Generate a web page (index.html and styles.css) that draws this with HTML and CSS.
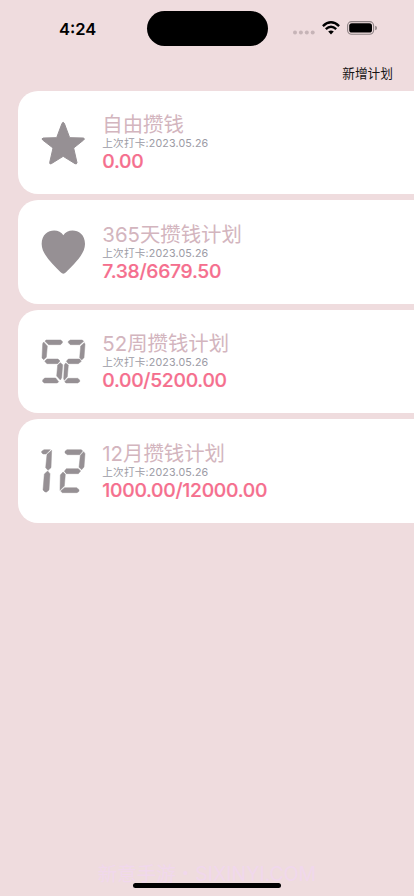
FILE: index.html
```html
<!DOCTYPE html>
<html lang="zh-CN">
<head>
<meta charset="utf-8">
<title>攒钱计划</title>
<link rel="stylesheet" href="styles.css">
</head>
<body>
<header class="status">
  <div class="time">4:24</div>
  <div class="island"></div>
  <div class="indicators">
    <svg class="dots" width="22" height="5" viewBox="0 0 22 5"><circle cx="2" cy="2.5" r="2"/><circle cx="7.9" cy="2.5" r="2"/><circle cx="13.8" cy="2.5" r="2"/><circle cx="19.7" cy="2.5" r="2"/></svg>
    <svg class="wifi" width="18" height="14" viewBox="0 0 18 14"><g fill="none" stroke="#000" stroke-width="2.4"><path d="M.9 5.1Q9-2.4 17.1 5.1"/><path d="M3.8 8.2Q9 3.5 14.2 8.2"/></g><path d="M6.2 10.6Q9 8.3 11.8 10.6L9 13.4Z"/></svg>
    <svg class="battery" width="31" height="14" viewBox="0 0 31 14"><rect x=".6" y=".6" width="26" height="12.6" rx="4" fill="none" stroke="#8d8284" stroke-width="1.1"/><rect x="2.2" y="2.2" width="22.8" height="9.4" rx="2.6"/><path d="M28.2 4.8Q30 5.3 30 7T28.2 9.2Z" fill="#8d8284"/></svg>
  </div>
</header>
<nav class="toolbar"><span>新增计划</span></nav>
<main class="plans">
  <section class="card">
    <svg class="icon star" viewBox="33 42 138 138"><path d="M96 52Q99.500 46 103 52L119 95L160 96Q166 98 161 102L131 126L141 170Q140 176 135 173L99.500 151L64 173Q59 176 59 170L69 126L38 102Q33 98 40 96L80 95Z"/></svg>
    <div class="info"><h2>自由攒钱</h2><p class="date">上次打卡:2023.05.26</p><p class="amount">0.00</p></div>
  </section>
  <section class="card">
    <svg class="icon" viewBox="33 42 138 138"><path d="M100 61C87 37 35 41 35 87C35 119 70 148 92 172Q100 180 108 172C130 148 165 119 165 87C165 41 113 37 100 61Z"/></svg>
    <div class="info"><h2>365天攒钱计划</h2><p class="date">上次打卡:2023.05.26</p><p class="amount">7.38/6679.50</p></div>
  </section>
  <section class="card">
    <svg class="icon segments" viewBox="33 42 138 138"><path d="M48 45H92L97 49V54L91 59H56L45 49ZM41 51L52 63L49 97L41 104L36 99L38 56ZM51 102H84L90 108L83 116H51L44 109ZM91 113L98 119L95 158L91 165L80 153L83 120ZM44 159H77L86 170L82 174H43L38 170V165ZM121 45H157L161 49L149 59H121L115 53V49ZM163 53L165 58L162 98L155 105L149 98L152 63ZM115 102H149L154 109L145 116H115L109 109ZM107 114L115 120L112 155L103 166L101 161L103 120ZM114 160H143L149 165V170L143 174H108L104 170Z"/></svg>
    <div class="info"><h2>52周攒钱计划</h2><p class="date">上次打卡:2023.05.26</p><p class="amount">0.00/5200.00</p></div>
  </section>
  <section class="card">
    <svg class="icon segments" viewBox="33 42 138 138"><path d="M42 44H61L48 57H39L35 53V49ZM65 46L63 98L54 106L47 98L51 58ZM53 108L60 116L57 165L50 171H45L39 165L43 117ZM111 44H154L158 48L149 59H112L105 54V49ZM161 50L165 56L162 96L155 104L147 97L151 61ZM109 101H145L152 108L145 116H109L103 109ZM99 111L106 118L103 153L90 166L91 120ZM104 158H140L147 164V169L141 173H97L92 168Z"/></svg>
    <div class="info"><h2>12月攒钱计划</h2><p class="date">上次打卡:2023.05.26</p><p class="amount">1000.00/12000.00</p></div>
  </section>
</main>
<footer class="bottom"><span class="brand">新意手游・SIXINYI.COM</span><div class="home"></div></footer>
</body>
</html>
```
FILE: styles.css
```css
* { box-sizing: border-box; margin: 0; padding: 0; }
body {
  height: 896px;
  display: flex;
  flex-direction: column;
  overflow: hidden;
  background: #efdcde;
  font-family: Inter, "Noto Sans CJK SC", sans-serif;
}
.status {
  height: 57px;
  display: grid;
  grid-template-columns: 146.5px 121px 1fr;
  align-items: center;
}
.time { padding-left: 59px; font-size: 16.5px; font-weight: 600; }
.island { height: 35px; border-radius: 18px; background: #000; }
.indicators { display: flex; align-items: center; padding-left: 25.5px; }
.dots { margin-top: 8px; fill: #c6b4b7; }
.wifi { margin-left: 7px; margin-top: -1px; }
.battery { margin-left: 7px; margin-top: -1px; }
.toolbar {
  height: 33.6px;
  padding: 5px 21px 0 0;
  font-size: 12.7px;
  line-height: 23px;
  text-align: right;
  color: #151314;
}
.plans { display: flex; flex-direction: column; gap: 6px; padding-left: 17.5px; }
.card {
  height: 103.6px;
  display: flex;
  align-items: center;
  gap: 15.3px;
  padding-left: 23.5px;
  background: #fff;
  border-radius: 20px 0 0 20px;
}
.icon { width: 46px; height: 46px; flex: none; margin-top: 1px; fill: #969094; }
.star { stroke: #969094; stroke-width: 3; stroke-linejoin: round; }
.segments { stroke: #969094; stroke-width: 1.4; stroke-linejoin: round; }
.info { padding-top: 1.4px; white-space: nowrap; }
h2 { font-size: 20.4px; line-height: 24px; font-weight: 400; color: #d3b5be; }
.date { font-size: 10.7px; line-height: 13px; letter-spacing: .14px; color: #9c9ba5; }
.amount { font-size: 19.3px; line-height: 23px; font-weight: 500; letter-spacing: -.27px; color: #f56f8e; -webkit-text-stroke: .2px #f56f8e; }
.bottom {
  margin-top: auto;
  display: flex;
  flex-direction: column;
  align-items: center;
  padding-bottom: 8px;
}
.brand { height: 21px; font-size: 19.5px; line-height: 24px; color: #f1d8ec; white-space: nowrap; }
.home { width: 148px; height: 5px; border-radius: 3px; background: #000; position: relative; }
```
